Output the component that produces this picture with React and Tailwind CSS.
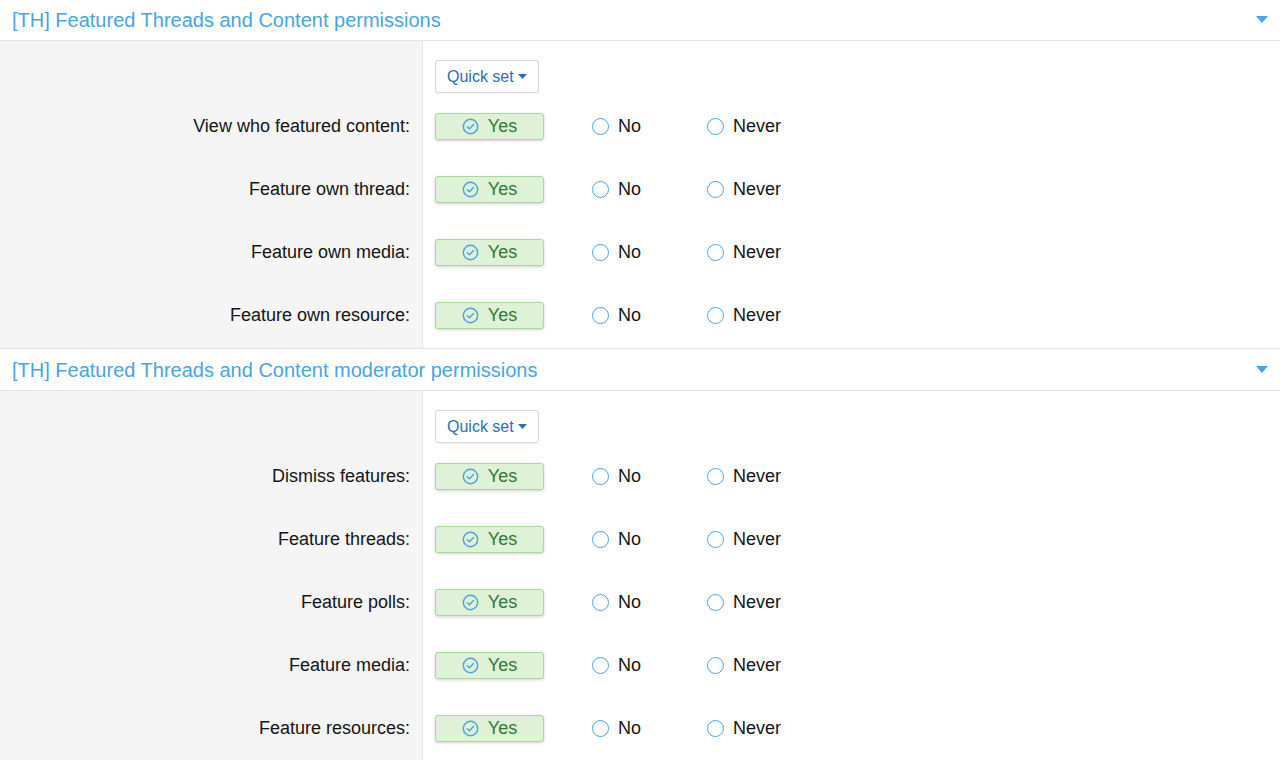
import React from "react";

const sections = [
  {
    title: "[TH] Featured Threads and Content permissions",
    rows: [
      "View who featured content:",
      "Feature own thread:",
      "Feature own media:",
      "Feature own resource:",
    ],
  },
  {
    title: "[TH] Featured Threads and Content moderator permissions",
    rows: [
      "Dismiss features:",
      "Feature threads:",
      "Feature polls:",
      "Feature media:",
      "Feature resources:",
    ],
  },
];

function CheckCircle() {
  return (
    <svg width="17" height="17" viewBox="0 0 18 18" fill="none">
      <circle cx="9" cy="9" r="7.6" stroke="#4aa3e2" strokeWidth="1.5" />
      <path d="M5.6 9.2l2.3 2.3 4.3-4.5" stroke="#4aa3e2" strokeWidth="1.5" strokeLinecap="round" strokeLinejoin="round" />
    </svg>
  );
}

function Radio() {
  return <span className="inline-block w-[17px] h-[17px] rounded-full border-[1.5px] border-[#4aa3e2] bg-white" />;
}

function Row({ label }) {
  return (
    <div className="flex items-center h-[27px]">
      <div className="w-[423px] shrink-0 pr-[13px] text-right text-[18px] text-[#141414]">{label}</div>
      <div className="flex items-center pl-[12px]">
        <div className="w-[109px] h-[27px] flex items-center justify-center gap-[9px] rounded-[3px] border border-[#a9d89f] bg-[#def2d6] shadow-[0_1px_3px_rgba(0,0,0,0.18)]">
          <CheckCircle />
          <span className="text-[18px] text-[#2f7a35]">Yes</span>
        </div>
        <div className="ml-[48px] w-[115px] flex items-center gap-[9px]">
          <Radio />
          <span className="text-[18px] text-[#141414]">No</span>
        </div>
        <div className="flex items-center gap-[9px]">
          <Radio />
          <span className="text-[18px] text-[#141414]">Never</span>
        </div>
      </div>
    </div>
  );
}

function Section({ title, rows, first }) {
  return (
    <div>
      <div className={`flex items-center justify-between pl-[12px] pr-[12px] border-b border-[#e3e3e3] bg-white ${first ? "h-[41px]" : "h-[43px] border-t"}`}>
        <span className="text-[20px] text-[#47a4e6]">{title}</span>
        <svg width="12" height="8" viewBox="0 0 12 8">
          <path d="M0 0h12L6 7z" fill="#47a4e6" />
        </svg>
      </div>
      <div className="relative bg-[linear-gradient(to_right,#f5f5f5_0,#f5f5f5_422px,#e4e4e4_422px,#e4e4e4_423px,#ffffff_423px)] pt-[19px] pb-[19px]">
        <div className="flex items-center h-[33px]">
          <div className="w-[423px] shrink-0" />
          <div className="pl-[12px]">
            <div className="h-[33px] px-[11px] flex items-center gap-[4px] rounded-[3px] border border-[#d8d8d8] bg-white shadow-[0_1px_2px_rgba(0,0,0,0.06)]">
              <span className="text-[16px] text-[#2b6fb0]">Quick set</span>
              <svg width="9" height="6" viewBox="0 0 9 6"><path d="M0 0h9L4.5 5z" fill="#2b6fb0" /></svg>
            </div>
          </div>
        </div>
        <div className="mt-[20px] flex flex-col gap-[36px]">
          {rows.map((r) => (
            <Row key={r} label={r} />
          ))}
        </div>
      </div>
    </div>
  );
}

export default function App() {
  return (
    <div className="w-[1280px] h-[760px] overflow-hidden bg-white font-['Liberation_Sans',Arial,sans-serif]">
      {sections.map((s, i) => (
        <Section key={s.title} {...s} first={i === 0} />
      ))}
    </div>
  );
}
